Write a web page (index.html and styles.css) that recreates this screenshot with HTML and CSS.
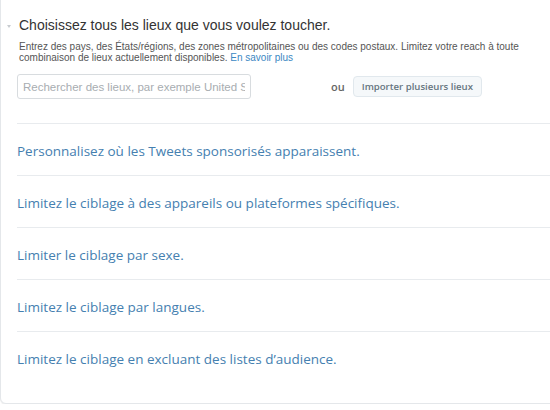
FILE: index.html
```html
<!DOCTYPE html>
<html lang="fr">
<head>
<meta charset="utf-8">
<link rel="stylesheet" href="styles.css">
</head>
<body>
<div class="card">
  <section class="locations">
    <div class="loc-head">
      <span class="caret"></span>
      <h2 class="loc-title">Choisissez tous les lieux que vous voulez toucher.</h2>
    </div>
    <p class="loc-desc">Entrez des pays, des États/régions, des zones métropolitaines ou des codes postaux. Limitez votre reach à toute combinaison de lieux actuellement disponibles. <a class="learn" href="#">En savoir plus</a></p>
    <div class="loc-row">
      <input class="loc-input" type="text" placeholder="Rechercher des lieux, par exemple United States">
      <span class="or">ou</span>
      <button class="import-btn" type="button">Importer plusieurs lieux</button>
    </div>
  </section>
  <ul class="options">
    <li class="option"><a href="#">Personnalisez où les Tweets sponsorisés apparaissent.</a></li>
    <li class="option"><a href="#">Limitez le ciblage à des appareils ou plateformes spécifiques.</a></li>
    <li class="option"><a href="#">Limiter le ciblage par sexe.</a></li>
    <li class="option"><a href="#">Limitez le ciblage par langues.</a></li>
    <li class="option last"><a href="#">Limitez le ciblage en excluant des listes d’audience.</a></li>
  </ul>
</div>
</body>
</html>
```
FILE: styles.css
```css
* { box-sizing: border-box; }
html, body { margin: 0; padding: 0; background: #fff; }
body { font-family: "Liberation Sans", Arial, sans-serif; color: #292f33; overflow: hidden; }

.card {
  margin: -8px -10px 0 0;
  border: 1px solid #e4e7ea;
  border-radius: 6px;
  box-shadow: 0 1px 1px rgba(0,0,0,0.07);
  padding: 0 0 18px 16px;
  background: #fff;
}

.locations { padding: 23px 0 24px 0; }

.loc-head { display: flex; align-items: center; margin-left: -10px; }
.caret {
  width: 0; height: 0;
  border-left: 2px solid transparent;
  border-right: 2px solid transparent;
  border-top: 3px solid #c8ccd0;
  margin: 3px 8px 0 0;
}
.loc-title {
  margin: 0;
  font-size: 14px;
  line-height: 18px;
  font-weight: normal;
  color: #333;
}

.loc-desc {
  margin: 7px 0 0 2px;
  width: 510px;
  font-size: 10px;
  line-height: 11px;
  color: #555;
}
.learn { color: #3b88c3; text-decoration: none; }

.loc-row { display: flex; align-items: center; margin-top: 11px; }
.loc-input {
  width: 234px;
  height: 25px;
  border: 1px solid #d8dcdf;
  border-radius: 3px;
  padding: 0 5px;
  font-family: "Liberation Sans", Arial, sans-serif;
  font-size: 11.5px;
  color: #333;
}
.loc-input::placeholder { color: #a8adb1; }
.or {
  margin-left: 80px;
  font-family: "Open Sans", sans-serif;
  font-size: 11px;
  font-weight: 600;
  color: #666;
}
.import-btn {
  margin-left: 8px;
  height: 21px;
  padding: 0 8px;
  border: 1px solid #e1e8ed;
  border-radius: 4px;
  background: #f5f8fa;
  font-family: "Open Sans", sans-serif;
  font-size: 9.6px;
  font-weight: 600;
  color: #66757f;
}

.options { list-style: none; margin: 0; padding: 0; }
.option {
  border-top: 1px solid #e8ebee;
  padding: 19px 0 16px 0;
  font-family: "Open Sans", sans-serif;
  font-size: 13.5px;
  line-height: 16px;
}
.option a { color: #4580b0; text-decoration: none; }
.option.last { padding-bottom: 18px; }
```
